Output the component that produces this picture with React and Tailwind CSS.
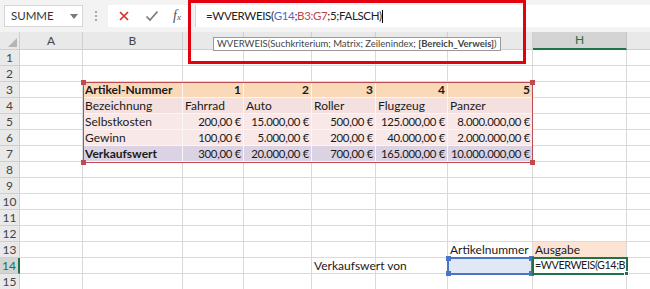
const COLS = [
  { id: 'A', w: 'w-[63px]' },
  { id: 'B', w: 'w-[100px]' },
  { id: 'C', w: 'w-[61px]', hidden: true },
  { id: 'D', w: 'w-[68px]', hidden: true },
  { id: 'E', w: 'w-[64px]', hidden: true },
  { id: 'F', w: 'w-[72px]', hidden: true },
  { id: 'G', w: 'w-[85px]', hidden: true },
  { id: 'H', w: 'w-[94px]' },
  { id: 'I', w: 'w-[60px]', hidden: true },
]

// table B3:G7
const TABLE = {
  3: {
    bg: 'bg-[#fad9b9]',
    cells: [
      { t: 'Artikel-Nummer', b: true },
      { t: '1', b: true, r: true },
      { t: '2', b: true, r: true },
      { t: '3', b: true, r: true },
      { t: '4', b: true, r: true },
      { t: '5', b: true, r: true },
    ],
  },
  4: {
    bg: 'bg-[#f3e0df]',
    cells: [
      { t: 'Bezeichnung' },
      { t: 'Fahrrad' },
      { t: 'Auto' },
      { t: 'Roller' },
      { t: 'Flugzeug' },
      { t: 'Panzer' },
    ],
  },
  5: {
    bg: 'bg-[#f8e8e8]',
    cells: [
      { t: 'Selbstkosten' },
      { t: '200,00 €', n: true },
      { t: '15.000,00 €', n: true },
      { t: '500,00 €', n: true },
      { t: '125.000,00 €', n: true },
      { t: '8.000.000,00 €', n: true },
    ],
  },
  6: {
    bg: 'bg-[#f8e8e8]',
    cells: [
      { t: 'Gewinn' },
      { t: '100,00 €', n: true },
      { t: '5.000,00 €', n: true },
      { t: '200,00 €', n: true },
      { t: '40.000,00 €', n: true },
      { t: '2.000.000,00 €', n: true },
    ],
  },
  7: {
    bg: 'bg-[#dbd3e3]',
    cells: [
      { t: 'Verkaufswert', b: true },
      { t: '300,00 €', n: true },
      { t: '20.000,00 €', n: true },
      { t: '700,00 €', n: true },
      { t: '165.000,00 €', n: true },
      { t: '10.000.000,00 €', n: true },
    ],
  },
}

const ROWS = Array.from({ length: 15 }, (_, i) => i + 1)

function cellFor(row, col) {
  const t = TABLE[row]
  const ci = 'BCDEFG'.indexOf(col)
  if (t && ci >= 0) {
    return { ...t.cells[ci], bg: t.bg, table: true }
  }
  if (row === 13 && col === 'G') return { t: 'Artikelnummer' }
  if (row === 13 && col === 'H') return { t: 'Ausgabe', bg: 'bg-[#fce3d3]' }
  if (row === 14 && col === 'E') return { t: 'Verkaufswert von', over: true }
  if (row === 14 && col === 'G') return { bg: 'bg-[#dfe8f4]' }
  if (row === 14 && col === 'H') return { t: '=WVERWEIS(G14;B', f: true }
  return {}
}

function Cell({ row, col }) {
  const c = cellFor(row, col.id)
  return (
    <div
      className={`${col.w} shrink-0 h-full border-r border-b ${
        c.table ? 'border-[#fbf6f6]' : 'border-[#dadada]'
      } ${c.bg || ''} ${c.over ? 'overflow-visible' : 'overflow-hidden'} flex items-center ${
        c.r || c.n ? 'justify-end pr-[2px]' : 'pl-[2px]'
      } ${c.n ? 'text-[11.4px] tracking-[-0.3px]' : ''} ${
        c.f ? 'text-[10.8px] tracking-[-0.45px]' : ''
      } whitespace-nowrap ${c.b ? 'font-bold' : ''}`}
    >
      {c.t}
    </div>
  )
}

function Handle({ className }) {
  return <div className={`absolute w-[5px] h-[5px] ${className}`} />
}

export default function App() {
  return (
    <div
      className="relative w-[650px] h-[289px] overflow-hidden bg-white text-[#1a1a1a]"
      style={{ fontFamily: 'Lato, "Noto Sans", sans-serif' }}
    >
      {/* formula bar */}
      <div className="h-[32px] bg-[#f3f3f3] flex items-start pt-[5px] pl-[4px]">
        <div className="w-[79px] h-[22px] bg-white border border-[#d6d6d6] flex items-center justify-between pl-[6px] pr-[4px] text-[11.5px] text-[#333]">
          SUMME
          <svg width="8" height="5" viewBox="0 0 8 5">
            <path d="M0 0 L8 0 L4 5 Z" fill="#7a7a7a" />
          </svg>
        </div>
        <div className="w-[25px] h-[22px] flex flex-col items-center justify-center gap-[2px]">
          <span className="w-[2px] h-[2px] bg-[#a8a8a8]" />
          <span className="w-[2px] h-[2px] bg-[#a8a8a8]" />
          <span className="w-[2px] h-[2px] bg-[#a8a8a8]" />
        </div>
        <div className="w-[80px] h-[22px] bg-white flex items-center">
          <svg width="12" height="12" viewBox="0 0 12 12" className="ml-[10px]">
            <path d="M2 2 L10 10 M10 2 L2 10" stroke="#d6312a" strokeWidth="1.7" />
          </svg>
          <svg width="14" height="12" viewBox="0 0 14 12" className="ml-[15px]">
            <path d="M1.5 6.5 L5 10 L12.5 1.5" stroke="#7a7a7a" strokeWidth="1.7" fill="none" />
          </svg>
          <span
            className="ml-[14px] italic text-[#555] text-[14px] leading-none"
            style={{ fontFamily: '"Liberation Serif", serif' }}
          >
            f<span className="text-[9px]">x</span>
          </span>
        </div>
        <div className="ml-[7px] flex-1 h-[22px] bg-white border-l border-[#d6d6d6] flex items-center pl-[10px] text-[11.5px] tracking-[-0.35px] text-[#222]">
          =WVERWEIS(<span className="text-[#3f6fc2]">G14</span>;
          <span className="text-[#c0454a]">B3:G7</span>;5;FALSCH)
          <span className="w-[1px] h-[13px] bg-black" />
        </div>
      </div>

      {/* column headers */}
      <div className="flex h-[18px] bg-[#e9e9e9] text-[12px] text-[#444]">
        <div className="w-[20px] shrink-0 h-full border-r border-b border-[#cfcfcf] flex items-end justify-end pr-[2px] pb-[2px]">
          <svg width="9" height="9" viewBox="0 0 9 9">
            <path d="M9 0 L9 9 L0 9 Z" fill="#b5b5b5" />
          </svg>
        </div>
        {COLS.map((c) => (
          <div
            key={c.id}
            className={`${c.w} shrink-0 h-full border-r flex items-center justify-center ${
              c.id === 'H'
                ? 'bg-[#d4d4d4] border-b-2 border-b-[#217346] border-r-[#c6c6c6] text-[#217346]'
                : 'border-b border-[#cfcfcf]'
            }`}
          >
            {c.hidden ? '' : c.id}
          </div>
        ))}
      </div>

      {/* rows */}
      <div className="text-[12px]">
        {ROWS.map((r) => (
          <div key={r} className="flex h-[16px]">
            <div
              className={`w-[20px] shrink-0 h-full border-b flex items-center justify-center text-[12px] ${
                r === 14
                  ? 'bg-[#d4d4d4] border-r-2 border-r-[#217346] border-b-[#c6c6c6] text-[#217346]'
                  : 'bg-[#e9e9e9] border-r border-[#cfcfcf] text-[#444]'
              }`}
            >
              {r}
            </div>
            {COLS.map((c) => (
              <Cell key={c.id} row={r} col={c} />
            ))}
          </div>
        ))}
      </div>

      {/* reference B3:G7 */}
      <div className="absolute left-[83px] top-[82px] w-[450px] h-[81px] border border-[#bf4b50]">
        <Handle className="-left-[3px] -top-[3px] bg-[#bf4b50]" />
        <Handle className="-right-[3px] -top-[3px] bg-[#bf4b50]" />
        <Handle className="-left-[3px] -bottom-[3px] bg-[#bf4b50]" />
        <Handle className="-right-[3px] -bottom-[3px] bg-[#bf4b50]" />
      </div>

      {/* reference G14 */}
      <div className="absolute left-[447px] top-[257px] w-[86px] h-[18px] border-2 border-[#4a74c4]">
        <Handle className="-left-[3px] -top-[3px] bg-[#4a74c4]" />
        <Handle className="-right-[3px] -top-[3px] bg-[#4a74c4]" />
        <Handle className="-left-[3px] -bottom-[3px] bg-[#4a74c4]" />
        <Handle className="-right-[3px] -bottom-[3px] bg-[#4a74c4]" />
      </div>

      {/* active cell H14 */}
      <div className="absolute left-[532px] top-[257px] w-[96px] h-[18px] border-2 border-[#217346]">
        <Handle className="-right-[3px] -bottom-[3px] bg-[#217346] border border-white" />
      </div>

      {/* tooltip */}
      <div className="absolute left-[213px] top-[37px] h-[14px] bg-white border border-[#9a9a9a] flex items-center px-[3px] text-[9.5px] text-[#444] whitespace-nowrap">
        WVERWEIS(Suchkriterium; Matrix; Zeilenindex;&nbsp;<b>[Bereich_Verweis]</b>)
      </div>

      {/* annotation */}
      <div className="absolute left-[188px] top-0 w-[338px] h-[64px] border-[3px] border-[#e4000f]" />
    </div>
  )
}
